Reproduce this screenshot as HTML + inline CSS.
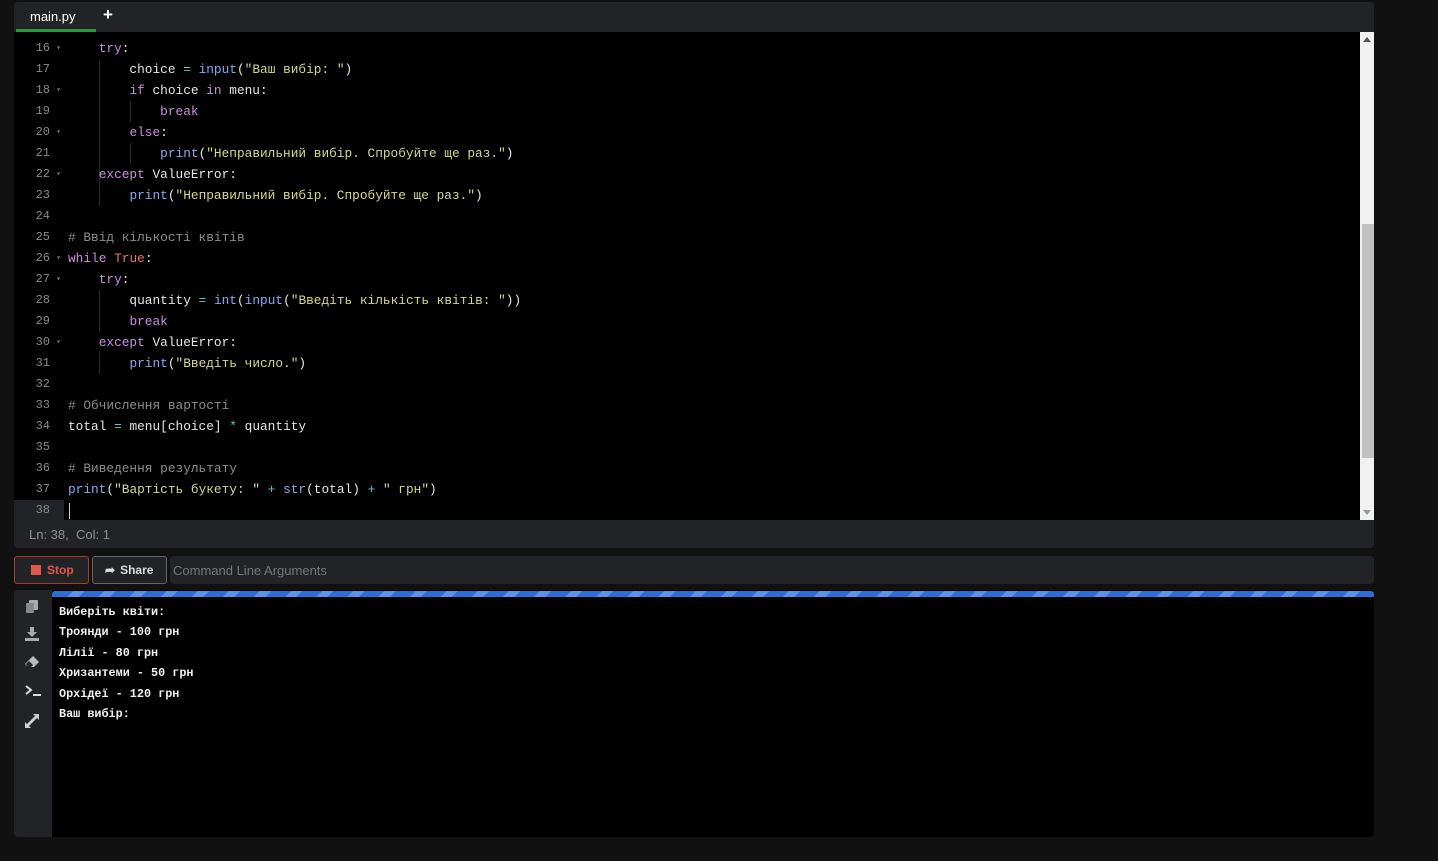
<!DOCTYPE html>
<html><head><meta charset="utf-8"><style>
*{margin:0;padding:0;box-sizing:border-box}
body{width:1438px;height:861px;background:#111112;font-family:"Liberation Sans",sans-serif;position:relative;overflow:hidden}
.panel{position:absolute;left:14px;top:2px;width:1360px;height:546px;background:#222326;border-radius:4px}
.tab{position:absolute;left:16px;top:2px;width:80px;height:30px;color:#fff;font-size:13px;padding:7px 0 0 14px;border-bottom:3px solid #2c9a3b}
.plus{position:absolute;left:103px;top:5px;color:#fff;font-size:17px;font-weight:bold}
.code{position:absolute;left:14px;top:32px;width:1360px;height:488px;background:#000;font-family:"Liberation Mono",monospace;font-size:12.8px}
.gut{position:absolute;left:0;top:0;width:50px;height:488px;background:#000}
.ln{position:absolute;left:0;width:50px;height:21px;color:#8a8a8a;font-size:12px;line-height:21px;text-align:right;padding-right:14px}
.ln.fd::after{content:"▾";position:absolute;right:3px;font-size:8px;color:#777}
.ln.cur{background:#222326}
.l{position:absolute;left:54px;height:21px;line-height:21px;color:#e6e6e6;white-space:pre}
.k{color:#c88fdc}.f{color:#8aa7ee}.s{color:#d3d88e}.c{color:#8c8c8c}.t{color:#e3756c}.o{color:#5cc7c7}
.g{position:absolute;width:1px;background:#2a2a2a}
.sb{position:absolute;left:1346px;top:0;width:14px;height:488px;background:#f1f1f1}
.thumb{position:absolute;left:2px;top:192px;width:12px;height:234px;background:#c1c1c1}
.status{position:absolute;left:29px;top:527px;color:#8f8f8f;font-size:13px}
.btn{position:absolute;top:556px;height:28px;border-radius:3px;font-size:12px;font-weight:bold;display:flex;align-items:center}
.cmd{position:absolute;left:170px;top:556px;width:1204px;height:28px;background:#222326;border-radius:3px;color:#777;font-size:13px;padding:7px 0 0 3px}
.out{position:absolute;left:14px;top:590px;width:1360px;height:247px;background:#000;border-radius:4px;overflow:hidden}
.side{position:absolute;left:0;top:0;width:38px;height:247px;background:#222326}
.stripe{position:absolute;left:38px;top:1px;right:0;height:6px;background:repeating-linear-gradient(-45deg,#2b6fd6 0 14px,#5b93e8 14px 22px);border-radius:3px 3px 0 0}
.ol{position:absolute;left:45px;color:#f0f0f0;font-family:"Liberation Mono",monospace;font-size:11.8px;font-weight:bold;white-space:pre}
.ic{position:absolute;left:11px;color:#bbb}
</style></head><body>
<div class="panel"></div>
<div class="tab">main.py</div>
<div class="plus">+</div>
<div class="code">
<div class="gut"></div>
<div class="ln fd" style="top:6px">16</div><div class="ln" style="top:27px">17</div><div class="ln fd" style="top:48px">18</div><div class="ln" style="top:69px">19</div><div class="ln fd" style="top:90px">20</div><div class="ln" style="top:111px">21</div><div class="ln fd" style="top:132px">22</div><div class="ln" style="top:153px">23</div><div class="ln" style="top:174px">24</div><div class="ln" style="top:195px">25</div><div class="ln fd" style="top:216px">26</div><div class="ln fd" style="top:237px">27</div><div class="ln" style="top:258px">28</div><div class="ln" style="top:279px">29</div><div class="ln fd" style="top:300px">30</div><div class="ln" style="top:321px">31</div><div class="ln" style="top:342px">32</div><div class="ln" style="top:363px">33</div><div class="ln" style="top:384px">34</div><div class="ln" style="top:405px">35</div><div class="ln" style="top:426px">36</div><div class="ln" style="top:447px">37</div><div class="ln cur" style="top:468px">38</div>
<div class="g" style="left:85px;top:27px;height:147px"></div>
<div class="g" style="left:116px;top:69px;height:21px"></div>
<div class="g" style="left:116px;top:111px;height:21px"></div>
<div class="g" style="left:85px;top:258px;height:42px"></div>
<div class="g" style="left:85px;top:321px;height:21px"></div>
<div class="l" style="top:6px">    <span class="k">try</span>:</div>
<div class="l" style="top:27px">        choice <span class="o">=</span> <span class="f">input</span>(<span class="s">"Ваш вибір: "</span>)</div>
<div class="l" style="top:48px">        <span class="k">if</span> choice <span class="k">in</span> menu:</div>
<div class="l" style="top:69px">            <span class="k">break</span></div>
<div class="l" style="top:90px">        <span class="k">else</span>:</div>
<div class="l" style="top:111px">            <span class="f">print</span>(<span class="s">"Неправильний вибір. Спробуйте ще раз."</span>)</div>
<div class="l" style="top:132px">    <span class="k">except</span> ValueError:</div>
<div class="l" style="top:153px">        <span class="f">print</span>(<span class="s">"Неправильний вибір. Спробуйте ще раз."</span>)</div>
<div class="l c" style="top:195px"># Ввід кількості квітів</div>
<div class="l" style="top:216px"><span class="k">while</span> <span class="t">True</span>:</div>
<div class="l" style="top:237px">    <span class="k">try</span>:</div>
<div class="l" style="top:258px">        quantity <span class="o">=</span> <span class="f">int</span>(<span class="f">input</span>(<span class="s">"Введіть кількість квітів: "</span>))</div>
<div class="l" style="top:279px">        <span class="k">break</span></div>
<div class="l" style="top:300px">    <span class="k">except</span> ValueError:</div>
<div class="l" style="top:321px">        <span class="f">print</span>(<span class="s">"Введіть число."</span>)</div>
<div class="l c" style="top:363px"># Обчислення вартості</div>
<div class="l" style="top:384px">total <span class="o">=</span> menu[choice] <span class="o">*</span> quantity</div>
<div class="l c" style="top:426px"># Виведення результату</div>
<div class="l" style="top:447px"><span class="f">print</span>(<span class="s">"Вартість букету: "</span> <span class="o">+</span> <span class="f">str</span>(total) <span class="o">+</span> <span class="s">" грн"</span>)</div>
<div style="position:absolute;left:55px;top:471px;width:1px;height:16px;background:#ccc"></div>
<div class="sb"><div class="thumb"></div><div style="position:absolute;left:3px;top:5px;border:4px solid transparent;border-bottom:5px solid #555;border-top:0"></div><div style="position:absolute;left:3px;top:478px;border:4px solid transparent;border-top:5px solid #999;border-bottom:0"></div></div>
</div>
<div class="status">Ln: 38,&nbsp; Col: 1</div>
<div class="btn" style="left:14px;width:75px;border:1px solid #b03a2e;background:#222326;color:#e0584a;padding-left:16px"><span style="display:inline-block;width:10px;height:10px;background:#e0584a;margin-right:6px"></span>Stop</div>
<div class="btn" style="left:92px;width:75px;border:1px solid #666;background:#222326;color:#ddd;padding-left:12px"><span style="margin-right:5px">➦</span>Share</div>
<div class="cmd">Command Line Arguments</div>
<div class="out">
<div class="side">
<svg class="ic" style="top:9px" width="14" height="14" viewBox="0 0 14 14"><rect x="4" y="1" width="9" height="10" rx="1" fill="#aaa"/><rect x="1" y="4" width="8" height="10" rx="1" fill="#888"/></svg>
<svg class="ic" style="top:37px" width="14" height="14" viewBox="0 0 14 14"><path d="M5 0h4v5h3l-5 5-5-5h3z" fill="#aaa"/><rect x="0" y="11" width="14" height="3" fill="#aaa"/></svg>
<svg class="ic" style="top:66px" width="14" height="12" viewBox="0 0 14 12"><path d="M8 0l6 6-5 5H3L0 8z" fill="#bbb"/><path d="M1 8l3-3 4 4-2 2H3z" fill="#222326"/></svg>
<svg class="ic" style="top:95px" width="16" height="12" viewBox="0 0 16 12"><path d="M1 1l5 4-5 4" stroke="#ddd" stroke-width="2" fill="none"/><rect x="8" y="9" width="8" height="2" fill="#ddd"/></svg>
<svg class="ic" style="top:124px" width="14" height="14" viewBox="0 0 14 14"><path d="M8 0h6v6l-2-2-8 8 2 2H0V8l2 2 8-8z" fill="#ccc"/></svg>
</div>
<div class="stripe"></div>
<div class="ol" style="top:15px">Виберіть квіти:</div>
<div class="ol" style="top:35px">Троянди - 100 грн</div>
<div class="ol" style="top:56px">Лілії - 80 грн</div>
<div class="ol" style="top:76px">Хризантеми - 50 грн</div>
<div class="ol" style="top:97px">Орхідеї - 120 грн</div>
<div class="ol" style="top:117px">Ваш вибір:</div>
</div>
</body></html>
